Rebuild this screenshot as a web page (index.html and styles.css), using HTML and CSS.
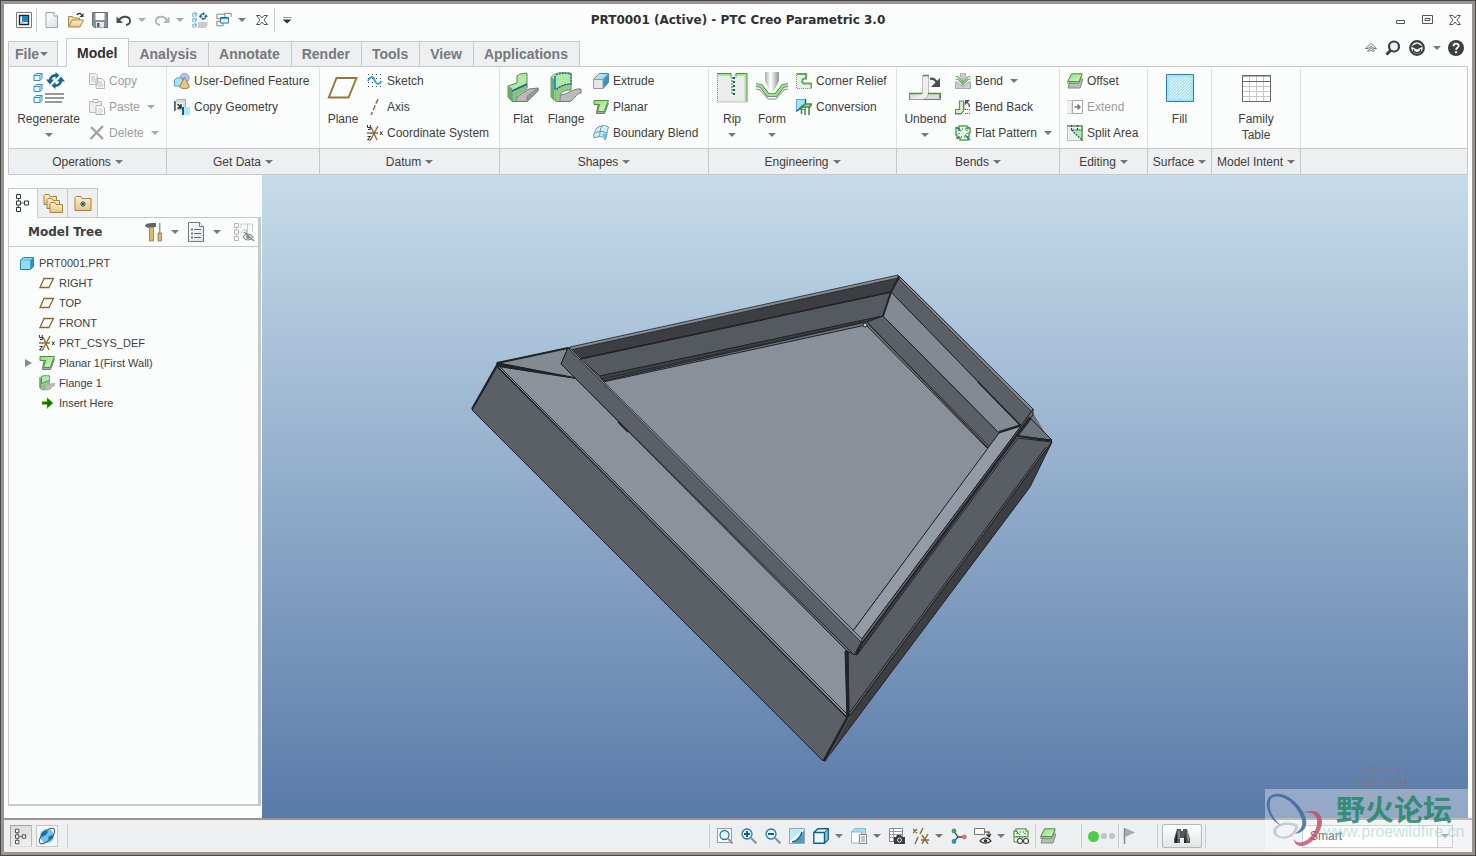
FILE: index.html
```html
<!DOCTYPE html>
<html lang="en">
<head>
  <meta charset="UTF-8">
  <meta name="viewport" content="width=device-width, initial-scale=1.0">
  <title>PRT0001 (Active) - PTC Creo Parametric 3.0</title>
  <link rel="stylesheet" href="styles.css">
</head>
<body>
  <!-- icon sprite -->
  <svg class="sprite" aria-hidden="true">
    <defs>
      <linearGradient id="gGreen" x1="0" y1="0" x2="1" y2="1"><stop offset="0" stop-color="#8fdc7c"/><stop offset="1" stop-color="#d8f8c8"/></linearGradient>
      <linearGradient id="gBlue" x1="0" y1="0" x2="1" y2="1"><stop offset="0" stop-color="#dff5fd"/><stop offset="1" stop-color="#5fb4da"/></linearGradient>
      <linearGradient id="gFolder" x1="0" y1="0" x2="0" y2="1"><stop offset="0" stop-color="#fdf0cf"/><stop offset="1" stop-color="#e8c582"/></linearGradient>
      <linearGradient id="gSteel" x1="0" y1="0" x2="1" y2="0"><stop offset="0" stop-color="#a9adb2"/><stop offset=".4" stop-color="#fff"/><stop offset="1" stop-color="#8e9297"/></linearGradient>
      <linearGradient id="gPaper" x1="0" y1="0" x2="1" y2="1"><stop offset="0" stop-color="#fff"/><stop offset="1" stop-color="#d5e2ea"/></linearGradient>
      <pattern id="hatch" width="3" height="3" patternUnits="userSpaceOnUse"><path d="M-1 1l2-2M0 3l3-3M2 4l2-2" stroke="#fff" stroke-width="1"/></pattern>
    </defs>
    <symbol id="app" viewBox="0 0 16 16"><path d="M.5.5h15v15H.5z" fill="#fff" stroke="#777"/><path d="M3.500 3.500h9v9h-9z" fill="#fff" stroke="#222" stroke-width="1.400"/><path d="M6 4h6v6H6z" fill="#1789cf"/><path d="M4.500 9.500h3v2h-3z" fill="#8cc6e8"/></symbol>
    <symbol id="new" viewBox="0 0 16 16"><path d="M2 .5h8l3.500 3.500v11.500H2z" fill="url(#gPaper)" stroke="#9aa3a9"/><path d="M10 .5V4h3.500" fill="#fff" stroke="#9aa3a9"/></symbol>
    <symbol id="open" viewBox="0 0 16 16"><path d="M.5 15V4.500h4l1 1.500h6v2" fill="#f5dca4" stroke="#a98645"/><path d="M.5 15L4 8h11.500L12 15z" fill="url(#gFolder)" stroke="#a98645"/><path d="M9 3c1-2 3-2 4.500-.5" fill="none" stroke="#333" stroke-width="1.500"/><path d="M15.500 1v4h-4z" fill="#333"/></symbol>
    <symbol id="save" viewBox="0 0 16 16"><path d="M.5.5h15v15h-13l-2-2z" fill="#8b8f94" stroke="#6a6e72"/><path d="M3.500 1h9v7h-9z" fill="#fff"/><path d="M4 10h8v5.500H4z" fill="#dfe9ee"/><path d="M5 11h2.500v4H5z" fill="#4a6675"/></symbol>
    <symbol id="undo" viewBox="0 0 16 16"><path d="M3 8C6 3.500 13 4 14 8c.5 3-1 4.500-4 5" fill="none" stroke="#4a4c50" stroke-width="1.900"/><path d="M.5 4.500V11h6.500z" fill="#4a4c50"/></symbol>
    <symbol id="redo" viewBox="0 0 16 16"><path d="M13 8C10 3.500 3 4 2 8c-.5 3 1 4.500 4 5" fill="none" stroke="#b4b6b9" stroke-width="1.900"/><path d="M15.500 4.500V11H9z" fill="#b4b6b9"/></symbol>
    <symbol id="regen" viewBox="0 0 32 32"><g fill="#e3f8ff" stroke="#2f93be"><path id="cubelet" d="M1 3.500l2-2h6v5l-2 2H1zM1 3.500h6v5M7 3.500l2-2"/><use href="#cubelet" y="11"/><use href="#cubelet" y="22"/></g><path d="M17 9c0-4 3-6 7-5.500M28 8c0 4-3 6-7 5.500" fill="none" stroke="#17688f" stroke-width="2.600"/><path d="M13 7.500h8l-4 5zM24 9.500h8L28 4.500zM22.500 0v7l4-3.500zM22.500 10v7l-4-3.500z" fill="#17688f"/><path d="M12 22h19M12 26h19M12 30h17" stroke="#98999b" stroke-width="2"/></symbol>
    <symbol id="windows" viewBox="0 0 18 16"><path d="M1 1.500h9v5H1zM1 9.500h7v5H1zM9 .5h8v4" fill="#fff" stroke="#777"/><path d="M5 5.500h9v6H5z" fill="#d4f1fb" stroke="#1d719b"/><path d="M5 5.500h9" stroke="#1d719b" stroke-width="2"/></symbol>
    <symbol id="close" viewBox="0 0 12 12"><path d="M.5 1.500h3.500l2 2.500 2-2.500h3.500L8 6l3.500 4.500H8L6 8l-2 2.500H.5L4 6z" fill="#fff" stroke="#555"/></symbol>
    <symbol id="min" viewBox="0 0 12 12"><path d="M1.500 6.500h8v3h-8z" fill="#fff" stroke="#555"/></symbol>
    <symbol id="max" viewBox="0 0 12 12"><path d="M.5 1.500h10v8H.5zM3 4.500h5v2H3z" fill="#fff" stroke="#555"/></symbol>
    <symbol id="collapse" viewBox="0 0 12 12"><path d="M.5 6.500L6 1.500l5.500 5H9L6 4.300 3 6.500zM2.500 9L6 5.800 9.500 9H7.500L6 8 4.500 9z" fill="#fff" stroke="#555" stroke-width=".8"/></symbol>
    <symbol id="search" viewBox="0 0 16 16"><circle cx="9" cy="6.500" r="5" fill="#e8f0fb" stroke="#3d3e40" stroke-width="2.200"/><path d="M5.500 10.500L1.500 14.500" stroke="#3d3e40" stroke-width="3"/></symbol>
    <symbol id="learn" viewBox="0 0 16 16"><circle cx="8" cy="8" r="6.800" fill="#fff" stroke="#3d3e40" stroke-width="2.200"/><path d="M2 6.500l6-3 6 3-6 3z" fill="#3d3e40"/><path d="M4.500 9v2.500l3.500 1.500 3.500-1.500V9" fill="none" stroke="#3d3e40" stroke-width="1.400"/></symbol>
    <symbol id="help" viewBox="0 0 16 16"><circle cx="8" cy="8" r="8" fill="#3d3e40"/><path d="M5.500 6.200c0-3.500 5.200-3.200 5.200-.4 0 1.900-2.600 2-2.600 4" fill="none" stroke="#fff" stroke-width="1.900"/><path d="M7 11.200h2.200v2H7z" fill="#fff"/></symbol>

    <symbol id="copy" viewBox="0 0 16 16"><path d="M.5.5h6l2 2v9h-8zM7 5.500h6l2.500 2.500v7.500H7z" fill="#f2f2f2" stroke="#b9b9b9"/><path d="M2 4h4M2 6h4M2 8h4M9 9h4M9 11h5M9 13h5" stroke="#c4c4c4"/></symbol>
    <symbol id="paste" viewBox="0 0 16 16"><path d="M.5 2.500h12v11H.5z" fill="#eee" stroke="#bbb"/><path d="M4 .5h5v3H4z" fill="#fff" stroke="#b3b3b3"/><path d="M7 6.500h6l2.500 2.500v6.500H7z" fill="#fff" stroke="#b3b3b3"/><path d="M9 10h5M9 12h5M9 14h4" stroke="#c9c9c9"/></symbol>
    <symbol id="delete" viewBox="0 0 16 16"><path d="M2 2l12 12M14 1L1.500 14" stroke="#a2a2a2" stroke-width="2.400"/></symbol>
    <symbol id="udf" viewBox="0 0 16 16"><circle cx="10.500" cy="5" r="4.500" fill="#b9c3f2" stroke="#8a95cf"/><path d="M.5 7l2-2h6v6l-2 2h-6z" fill="#a6e6fb" stroke="#4aa3cc"/><path d="M10.500 4L5.500 14c2 2 8 2 10 0z" fill="#e9c583" stroke="#9d7a3f"/></symbol>
    <symbol id="copygeo" viewBox="0 0 16 16"><path d="M1.500 3l2-2.500h8V8l-2 2.500h-8z" fill="#d9d9d9" stroke="#aaa"/><path d="M2 3.500h7v7H2z" fill="#f0f0f0"/><path d="M.8 2v10" stroke="#40677f" stroke-width="1.600"/><path d="M3.500 5l3.500 3.500M7 5v4H3.500" stroke="#222" stroke-width="1.300" fill="none"/><path d="M8 8h2v8H8z" fill="#0c5d84"/><path d="M10 8h6v8h-6z" fill="#a7ecff"/></symbol>
    <symbol id="plane" viewBox="0 0 32 32"><path d="M9.500 6h20l-8 19.500H1.800z" fill="none" stroke="#98743a" stroke-width="1.900"/></symbol>
    <symbol id="planesm" viewBox="0 0 16 16"><path d="M5 3.500h9.500l-4.500 9H1z" fill="none" stroke="#8a6930" stroke-width="1.300"/></symbol>
    <symbol id="sketch" viewBox="0 0 16 16"><path d="M1 1.500h15M1 5.500h15M1 9.500h15M1 13.500h15" stroke="#444" stroke-dasharray="1 3"/><path d="M1 8c2-5 5-5 6.500-1s4 6 7 1" fill="none" stroke="#3aa3d3" stroke-width="2"/></symbol>
    <symbol id="axis" viewBox="0 0 16 16"><path d="M11 0L4 16" stroke="#8f6e3a" stroke-width="1.500" stroke-dasharray="5 2"/></symbol>
    <symbol id="csys" viewBox="0 0 16 16"><path d="M0 8h11M4 2l6 13M11 1L3.500 15" stroke="#8f6e3a" stroke-width="1.400"/><path d="M.5 0v2.500H3M3.300 0v4.500H1M.5 11.500h3L.5 15h3.200M13 6.500l2.500 3.500M15.500 6.500L13 10" fill="none" stroke="#333" stroke-width="1"/></symbol>
    <symbol id="flat" viewBox="0 0 32 32"><path d="M11 24l11-7 9-1v3L20 29.500H7z" fill="#b9b9b9" stroke="#777"/><path d="M20 24l11-8v3L20 29.500z" fill="#999" stroke="#777" stroke-width=".6"/><path d="M1 14l9-3V4l3-2 7-1v15L9 22v7.500H5L1 25z" fill="#b4e8a6" stroke="#529053"/><path d="M1 14l4 2v13L1 25z" fill="#6fa86d"/><path d="M5 19l15-6v4L10 23l-1 6.500H5.500z" fill="#8bc284" stroke="#529053" stroke-width=".6"/><path d="M5 19l15-7" stroke="#146a8c" stroke-width="1.600"/></symbol>
    <symbol id="flange" viewBox="0 0 32 32"><path d="M10 23c8 0 12-7 21-6v4c-5 0-7 8-12 8.500H9z" fill="#bcbcbc" stroke="#777"/><path d="M1 5l4-3C9 0 15 0 21 1v17c-6 0-10 2-11 5v6.500H6L1 25z" fill="#b4e8a6" stroke="#6fa86d"/><path d="M5 17c5-3 10-5 16-5v6c-6 0-10 2-11 5v6.500H6l-1-2z" fill="#96c98e" stroke="#529053" stroke-width=".6"/><path d="M1 5l3 2v22L1 25z" fill="#6fa86d"/><path d="M6 3c4-2 9-2 15-1v10c-6 0-11 2-15 6" fill="none" stroke="#14608a" stroke-width="1.300" stroke-dasharray="2 1"/><path d="M5 4v14" stroke="#2395cb" stroke-width="2"/></symbol>
    <symbol id="extrude" viewBox="0 0 16 16"><path d="M.5 6.500L6 .5h9.500v9L10 15.500z" fill="url(#gBlue)" stroke="#3c8db3"/><path d="M10 6.500L15.500.5v9l-5.500 6z" fill="#3a93bf"/><path d="M.5 6.500H10v9H.5z" fill="#e6e6e6" stroke="#999"/></symbol>
    <symbol id="planar" viewBox="0 0 16 16"><path d="M1 4.500h4.500L4 10.500l-.5 4h8L15.500 4" fill="#aaa" stroke="#777"/><path d="M1 1.500h14.500L11 12.500H4.500L6.500 5.500H1z" fill="url(#gGreen)" stroke="#4e9145"/></symbol>
    <symbol id="blend" viewBox="0 0 16 16"><path d="M4 3c4-3 8-3 11.500-1-2 5-1 9-3.500 13-1-4-6-4-11-2C0 9 2 6 4 3z" fill="#d2f0fa" stroke="#6f95a6"/><path d="M9 1C6 5 8 9 5.500 12M2 8c4-2 8-2 12 0" fill="none" stroke="#6f95a6"/><path d="M9 9l5-1-2 7z" fill="#6cbfe2"/></symbol>
    <symbol id="rip" viewBox="0 0 32 32"><path d="M1 2h30v28H1z" fill="#ececec"/><path d="M1.500 2v28H30" fill="none" stroke="#888" stroke-dasharray="1 1"/><path d="M1 3h14v3M31 3H20v3" fill="none" stroke="#a5e892" stroke-width="2"/><path d="M29.500 3v27" stroke="#a5e892" stroke-width="2"/><path d="M1 1.500h14v2M20 3.500v-2h11V30" fill="none" stroke="#4f8a49"/><path d="M16 5v18" stroke="#7aa276" stroke-width="1.600" stroke-dasharray="2 1"/><path d="M18 5v18" stroke="#0e5a86" stroke-width="2" stroke-dasharray="2 2"/></symbol>
    <symbol id="form" viewBox="0 0 32 32"><path d="M9 0h14v9l-5 10h-4L9 9z" fill="url(#gSteel)"/><path d="M0 13l5 1 7 9h8l7-9 5-1" fill="none" stroke="#5b9d54" stroke-width="4"/><path d="M0 13l5 1 7 9h8l7-9 5-1" fill="none" stroke="#a6dd97" stroke-width="2"/><path d="M0 17l4 1 8 9h8l8-9 4-1" fill="none" stroke="#888"/></symbol>
    <symbol id="corner" viewBox="0 0 16 16"><path d="M.5 1h9v4c-5 0-4 6 0 5h6v5.500H.5z" fill="#e8efe8"/><path d="M.5 1h9.500v4.500c-5-1-5 6-.5 5h6v5" fill="none" stroke="#5daa50" stroke-width="2"/><path d="M.5 2v13.500H15" fill="none" stroke="#888" stroke-dasharray="1 1"/></symbol>
    <symbol id="convert" viewBox="0 0 16 16"><path d="M.5.5h9v10h-9z" fill="#9fe3fa" stroke="#5faac8"/><path d="M9.500 0v5M0 12.500L5 9" stroke="#155f88" stroke-width="1.400"/><path d="M5 8l4-3h6.500L14 8zM5.500 8v7M9 10v6M13 8v8" fill="#9fdb90" stroke="#4e8b49" stroke-width="1.600"/></symbol>
    <symbol id="unbend" viewBox="0 0 32 32"><path d="M.5 21.500h31v6H.5z" fill="#ddd" stroke="#777"/><path d="M13.500 21.500v-18h6v16c0 4-2 8-6 8H.5" fill="#eee" stroke="#888" stroke-dasharray="1 1"/><path d="M0 21.500h13M14 3.500h6M19 21.500h12v5" stroke="#4c9144" stroke-width="1.500" fill="none"/><path d="M21 7c3-1 6 1 7 4" fill="none" stroke="#4b4c4e" stroke-width="2.200"/><path d="M31 6v9h-9z" fill="#4b4c4e"/></symbol>
    <symbol id="bend" viewBox="0 0 16 16"><path d="M5.500 0h5v4L8 8 5.500 4z" fill="#ccc" stroke="#999" stroke-width=".7"/><path d="M.5 3.500l3 .5L8 9.500 12.500 4l3-.5M.5 6l3 .5L8 12l4.500-5.500 3-.5" fill="none" stroke="#6aac62" stroke-width="1.200"/><path d="M.5 9h2L8 14l5.500-5h2v6.500H.5z" fill="#cfcfcf" stroke="#999" stroke-width=".8"/></symbol>
    <symbol id="bendback" viewBox="0 0 16 16"><path d="M.5 10.500h4V2h4v10L6 15H.5z" fill="#d8f2d2" stroke="#5c9656" stroke-width="1.200"/><path d="M.5 14.500H7M9 11V3" stroke="#777"/><path d="M10 10.500h6M10 14.500h6" stroke="#555" stroke-dasharray="1 1"/><path d="M14 8c1-2-1-4-3-5" fill="none" stroke="#555" stroke-width="1.300"/><path d="M10 1h5l-5 5z" fill="#555"/></symbol>
    <symbol id="flatpat" viewBox="0 0 16 16"><path d="M4 1h8v2h3v5h-1v4h-1v3H5v-2H2v-3H1V3h3z" fill="#e4f8dd" stroke="#5aa64e" stroke-width="1.500"/><path d="M4 4h8v8H4z" fill="none" stroke="#333" stroke-dasharray="1 2"/><path d="M1 2l5 4M10 10l5 5M2 14l2-2M12 4l2-2" stroke="#2278ad" stroke-width="1.400"/></symbol>
    <symbol id="offset" viewBox="0 0 16 16"><path d="M4 6h12l-3 9H1z" fill="#bbb" stroke="#888"/><path d="M4.500.8h10.700L12 8.500H.8z" fill="url(#gGreen)" stroke="#4c8f43"/><path d="M.8 8.500v2H12l3-8" fill="none" stroke="#6a9f63"/></symbol>
    <symbol id="extend" viewBox="0 0 16 16"><path d="M0 1.500h5v13H0" fill="#f0f0f0" stroke="#ccc"/><path d="M5.500 1.500h10v13h-10z" fill="#fff" stroke="#aaa"/><path d="M7.500 8h5M10.500 5.500L13 8l-2.500 2.500" fill="none" stroke="#777" stroke-width="1.500"/></symbol>
    <symbol id="split" viewBox="0 0 16 16"><path d="M.5.5h15v15H.5z" fill="#eee" stroke="#888" stroke-dasharray="1 1"/><path d="M5 5h9v8z" fill="#aeeb9d"/><path d="M0 1h15v15" fill="none" stroke="#5ca350" stroke-width="1.500"/><path d="M4.500 0v5h11M4.500 5L15 15M10.500 0v5" fill="none" stroke="#13547a" stroke-width="1.200" stroke-dasharray="2 1"/></symbol>
    <symbol id="fill" viewBox="0 0 32 32"><path d="M2.500 2.500h27v27h-27z" fill="#a3e5fb" stroke="#2b7fa6"/><path d="M5 5h22v22H5z" fill="url(#hatch)"/></symbol>
    <symbol id="table" viewBox="0 0 32 32"><path d="M2.500 3.500h28v26h-28z" fill="#fff" stroke="#666"/><path d="M3 14.500h27M3 19.500h27M3 24.500h27M9.500 4v25M16.500 4v25M23.500 4v25" stroke="#c6c6c6"/><path d="M2.500 4h28M2.500 9.500h28" stroke="#666"/></symbol>

    <symbol id="nodes" viewBox="0 0 16 20"><path d="M3.500 5v10M6 10h4" stroke="#666"/><path d="M1.500 1.500h4v4h-4zM1.500 8h4v4h-4zM1.500 14.500h4v4h-4zM9.500 8h4v4h-4z" fill="#fff" stroke="#333"/></symbol>
    <symbol id="folders" viewBox="0 0 20 20"><g id="fold" fill="url(#gFolder)" stroke="#a9853f"><path d="M1 2.500l1-1h4l1 2h6.500v8H1z"/></g><use href="#fold" x="3" y="4"/><use href="#fold" x="6" y="8"/></symbol>
    <symbol id="favs" viewBox="0 0 18 16"><path d="M1 2.500l1-1h5l1 2h9v12H1z" fill="url(#gFolder)" stroke="#a9853f"/><path d="M9 6v6M6 9h6M7 7l4 4M11 7l-4 4" stroke="#12587c" stroke-width="1"/></symbol>
    <symbol id="tools" viewBox="0 0 18 20"><path d="M4.500 5h4v14h-4z" fill="#e0b46e" stroke="#8d6932" stroke-width=".7"/><path d="M0 4c1-3 4-3 11-3v4H5L3 6z" fill="#5f636a"/><path d="M14 1h1.500v10H14z" fill="#999"/><path d="M13 11h3.500v8H13z" fill="#e0b46e" stroke="#8d6932" stroke-width=".7"/></symbol>
    <symbol id="settings" viewBox="0 0 16 20"><path d="M.5.5h11l4 4v15H.5z" fill="url(#gPaper)" stroke="#777"/><path d="M11.500.5v4h4" fill="#fff" stroke="#777"/><path d="M6 7.500h7M6 11.500h7M6 15.500h7" stroke="#666"/><path d="M3 6.500h2v2H3zM3 10.500h2v2H3zM3 14.500h2v2H3z" fill="#777"/></symbol>
    <symbol id="hidden" viewBox="0 0 22 20"><path d="M3.500 5v10M6 10h4M8 2h12M8 2v4M14.500 2v10M19.500 2v8" stroke="#c9c9c9" fill="none"/><path d="M1.500 1.500h4v4h-4zM1.500 8h4v4h-4zM1.500 14.500h4v4h-4zM9.500 8h4v4" fill="#fff" stroke="#b5b5b5"/><path d="M10 15c3-4 7-4 10 0-3 4-7 4-10 0zM11 10l10 9" fill="none" stroke="#888" stroke-width="1.200"/><circle cx="15" cy="15" r="2" fill="#888"/></symbol>
    <symbol id="part" viewBox="0 0 16 16"><path d="M1.500 5l3-2.500h10v9l-3 3h-10z" fill="#8fdcfa" stroke="#2f7fa6"/><path d="M1.500 5h10v9.500" fill="none" stroke="#58b3d9"/><path d="M11.500 5l3-2.500v9l-3 3z" fill="#2594c6"/></symbol>
    <symbol id="insert" viewBox="0 0 16 16"><path d="M3 6.500h5v-4l6 5.500-6 5.500v-4H3z" fill="#067a06" stroke="#9bd018" stroke-width=".6"/></symbol>
    <symbol id="globe" viewBox="0 0 18 18"><circle cx="9" cy="9" r="7" fill="#6cc6ef"/><path d="M3 7c2-4 6-4 7-2l-2 3-4 2zM10 10l4-2 1 3-4 3z" fill="#1777ae"/><ellipse cx="9" cy="9" rx="10" ry="4.500" transform="rotate(-45 9 9)" fill="none" stroke="#47565f"/></symbol>

    <symbol id="zoomfit" viewBox="0 0 16 16"><path d="M.5.5h14v14H.5z" fill="#fff" stroke="#999"/><circle cx="7.500" cy="7" r="4.500" fill="#e6f7fd" stroke="#237ca8" stroke-width="1.300"/><path d="M11 10.500l4.500 5" stroke="#999" stroke-width="2.200"/></symbol>
    <symbol id="zoomin" viewBox="0 0 16 16"><circle cx="6" cy="6" r="5" fill="#e6f7fd" stroke="#237ca8" stroke-width="1.300"/><path d="M3 6h6M6 3v6" stroke="#175f88" stroke-width="2"/><path d="M10 10l5.500 5.500" stroke="#999" stroke-width="2.400"/></symbol>
    <symbol id="zoomout" viewBox="0 0 16 16"><circle cx="6" cy="6" r="5" fill="#e6f7fd" stroke="#237ca8" stroke-width="1.300"/><path d="M3 6h6" stroke="#175f88" stroke-width="2"/><path d="M10 10l5.500 5.500" stroke="#999" stroke-width="2.400"/></symbol>
    <symbol id="repaint" viewBox="0 0 16 16"><path d="M.5.5h15v15H.5z" fill="#fff" stroke="#8fa9b5"/><path d="M1 1h14L1 13z" fill="#bfe8f5"/><path d="M15 2v13H4c5-3 8-7 11-13z" fill="#4d9dc4"/><path d="M3 14c5-1 8-4 10-10" fill="none" stroke="#17688f" stroke-width="1.500"/></symbol>
    <symbol id="cube" viewBox="0 0 16 16"><path d="M.8 4.500L5 .8h10.200v10.500l-4 4H.8z" fill="#e9f8fd" stroke="#155f88" stroke-width="1.400"/><path d="M11.500 4.500l3.700-3.700v10.500l-3.700 3.700z" fill="#7fc5e2" stroke="#155f88"/><path d="M.8 4.500h10.700v10.800" fill="none" stroke="#155f88" stroke-width="1.400"/></symbol>
    <symbol id="views" viewBox="0 0 16 16"><path d="M.5 4l3-3.500h11v7" fill="#9fe0f7" stroke="#7fbbd0"/><path d="M.5 4h10v11H.5z" fill="#fff" stroke="#aac"/><path d="M8.500 6.500h7v9h-7z" fill="#fff" stroke="#888"/><path d="M10 9h4M10 11h4M10 13h4" stroke="#888"/></symbol>
    <symbol id="viewmgr" viewBox="0 0 16 16"><path d="M.5.500h13v13H.5z" fill="#fff" stroke="#888"/><path d="M4.500 1v12M1 3.500h12M1 6.500h12M1 9.500h5" stroke="#999"/><path d="M5 9h2l1-2h4l1 2h3v7H5z" fill="#3c3d40"/><circle cx="10.500" cy="12" r="2" fill="#3c3d40" stroke="#ddd"/></symbol>
    <symbol id="datumdisp" viewBox="0 0 16 16"><path d="M0 1l4 4M4 1L0 5M10 0L7 6M5 9l-3 7M8 12h8M9 7l6 9M15 6L9 16" stroke="#8a6b35" stroke-width="1.400"/></symbol>
    <symbol id="spin" viewBox="0 0 16 16"><path d="M3 3l4 6 6 0M7 9l-5 5" fill="none" stroke="#444" stroke-width="1.300"/><circle cx="3" cy="3" r="2.400" fill="#4f9f58"/><circle cx="13.300" cy="9" r="2.400" fill="#d97777"/><circle cx="3" cy="13.500" r="2.400" fill="#3590bd"/></symbol>
    <symbol id="annot" viewBox="0 0 18 16"><path d="M.5.5h10v6H.5z" fill="#fffbe6" stroke="#777"/><path d="M11 4h4v4M12.500 6L15 9l2-3M6 13c3-4 8-4 11 0-3 3-8 3-11 0z" fill="none" stroke="#333" stroke-width="1.200"/><circle cx="11.500" cy="13" r="1.800" fill="#333"/></symbol>
    <symbol id="flatprev" viewBox="0 0 16 16"><path d="M3 .8h10v2h2v6H1V3h2z" fill="#dcf7d4" stroke="#58a24c" stroke-width="1.300"/><path d="M1 9v5h3M2 2l5 5" stroke="#4b9741" fill="none"/><path d="M4 4h8v5H4z" stroke="#444" stroke-dasharray="1 2" fill="none"/><circle cx="7" cy="13" r="2.500" fill="#fff" stroke="#444" stroke-width="1.200"/><circle cx="13" cy="13" r="2.500" fill="#fff" stroke="#444" stroke-width="1.200"/></symbol>
    <symbol id="flag" viewBox="0 0 16 16"><path d="M2.500 0v16" stroke="#888" stroke-width="1.500"/><path d="M3 0l10 4.500L3 9z" fill="#aaa"/></symbol>
    <symbol id="find" viewBox="0 0 18 18"><path d="M4 2h4v2h2V2h4l3 10v4h-6v-5H7v5H1v-4z" fill="#55575a"/><path d="M4 5L2 13v3h2zM12 5l1 11h-2z" fill="#1d1e20"/><path d="M6 4v8M14.500 5l1 9" stroke="#aaa"/></symbol>
  </svg>

  <div class="window">
    <header class="titlebar">
      <div class="quick">
        <button class="tool" aria-label="Window menu"><svg class="ic"><use href="#app"/></svg></button>
        <span class="sep"></span>
        <button class="tool" aria-label="New"><svg class="ic"><use href="#new"/></svg></button>
        <button class="tool" aria-label="Open"><svg class="ic"><use href="#open"/></svg></button>
        <button class="tool" aria-label="Save"><svg class="ic"><use href="#save"/></svg></button>
        <button class="tool" aria-label="Undo"><svg class="ic"><use href="#undo"/></svg></button>
        <button class="drop" aria-label="Undo list"><i class="caret light"></i></button>
        <button class="tool" aria-label="Redo"><svg class="ic"><use href="#redo"/></svg></button>
        <button class="drop" aria-label="Redo list"><i class="caret light"></i></button>
        <button class="tool" aria-label="Regenerate model"><svg class="ic"><use href="#regen"/></svg></button>
        <button class="tool" aria-label="Windows"><svg class="ic"><use href="#windows"/></svg></button>
        <button class="drop" aria-label="Windows list"><i class="caret"></i></button>
        <button class="tool" aria-label="Close model"><svg class="ic tiny"><use href="#close"/></svg></button>
        <span class="sep"></span>
        <button class="tool" aria-label="Customize toolbar"><i class="caret bar"></i></button>
      </div>
      <h1>PRT0001 (Active) - PTC Creo Parametric 3.0</h1>
      <div class="winbtns">
        <button aria-label="Minimize"><svg class="ic tiny"><use href="#min"/></svg></button>
        <button aria-label="Maximize"><svg class="ic tiny"><use href="#max"/></svg></button>
        <button aria-label="Close"><svg class="ic tiny"><use href="#close"/></svg></button>
      </div>
    </header>

    <nav class="tabs">
      <button class="tab file">File<i class="caret"></i></button>
      <button class="tab active">Model</button>
      <button class="tab">Analysis</button>
      <button class="tab">Annotate</button>
      <button class="tab">Render</button>
      <button class="tab">Tools</button>
      <button class="tab">View</button>
      <button class="tab last">Applications</button>
      <div class="helpers">
        <button aria-label="Collapse ribbon"><svg class="ic tiny"><use href="#collapse"/></svg></button>
        <button aria-label="Search"><svg class="ic"><use href="#search"/></svg></button>
        <button aria-label="Learning"><svg class="ic"><use href="#learn"/></svg></button>
        <button class="drop" aria-label="Learning list"><i class="caret"></i></button>
        <button aria-label="Help"><svg class="ic"><use href="#help"/></svg></button>
      </div>
    </nav>

    <section class="ribbon">
      <div class="group">
        <div class="cmds">
          <button class="big w-lg"><svg><use href="#regen"/></svg>Regenerate<i class="caret"></i></button>
          <div class="stack">
            <button class="cmd" disabled><svg class="ic"><use href="#copy"/></svg>Copy</button>
            <button class="cmd" disabled><svg class="ic"><use href="#paste"/></svg>Paste<i class="caret light"></i></button>
            <button class="cmd" disabled><svg class="ic"><use href="#delete"/></svg>Delete<i class="caret light"></i></button>
          </div>
        </div>
        <button class="title">Operations<i class="caret"></i></button>
      </div>
      <div class="group">
        <div class="cmds">
          <div class="stack">
            <button class="cmd"><svg class="ic"><use href="#udf"/></svg>User-Defined Feature</button>
            <button class="cmd"><svg class="ic"><use href="#copygeo"/></svg>Copy Geometry</button>
          </div>
        </div>
        <button class="title">Get Data<i class="caret"></i></button>
      </div>
      <div class="group">
        <div class="cmds">
          <button class="big"><svg><use href="#plane"/></svg>Plane</button>
          <div class="stack">
            <button class="cmd"><svg class="ic"><use href="#sketch"/></svg>Sketch</button>
            <button class="cmd"><svg class="ic"><use href="#axis"/></svg>Axis</button>
            <button class="cmd"><svg class="ic"><use href="#csys"/></svg>Coordinate System</button>
          </div>
        </div>
        <button class="title">Datum<i class="caret"></i></button>
      </div>
      <div class="group">
        <div class="cmds">
          <button class="big"><svg><use href="#flat"/></svg>Flat</button>
          <button class="big w-sm"><svg><use href="#flange"/></svg>Flange</button>
          <div class="stack">
            <button class="cmd"><svg class="ic"><use href="#extrude"/></svg>Extrude</button>
            <button class="cmd"><svg class="ic"><use href="#planar"/></svg>Planar</button>
            <button class="cmd"><svg class="ic"><use href="#blend"/></svg>Boundary Blend</button>
          </div>
        </div>
        <button class="title">Shapes<i class="caret"></i></button>
      </div>
      <div class="group">
        <div class="cmds">
          <button class="big"><svg><use href="#rip"/></svg>Rip<i class="caret"></i></button>
          <button class="big"><svg><use href="#form"/></svg>Form<i class="caret"></i></button>
          <div class="stack">
            <button class="cmd"><svg class="ic"><use href="#corner"/></svg>Corner Relief</button>
            <button class="cmd"><svg class="ic"><use href="#convert"/></svg>Conversion</button>
          </div>
        </div>
        <button class="title">Engineering<i class="caret"></i></button>
      </div>
      <div class="group">
        <div class="cmds">
          <button class="big w-md"><svg><use href="#unbend"/></svg>Unbend<i class="caret"></i></button>
          <div class="stack">
            <button class="cmd"><svg class="ic"><use href="#bend"/></svg>Bend<i class="caret"></i></button>
            <button class="cmd"><svg class="ic"><use href="#bendback"/></svg>Bend Back</button>
            <button class="cmd"><svg class="ic"><use href="#flatpat"/></svg>Flat Pattern<i class="caret"></i></button>
          </div>
        </div>
        <button class="title">Bends<i class="caret"></i></button>
      </div>
      <div class="group">
        <div class="cmds">
          <div class="stack">
            <button class="cmd"><svg class="ic"><use href="#offset"/></svg>Offset</button>
            <button class="cmd" disabled><svg class="ic"><use href="#extend"/></svg>Extend</button>
            <button class="cmd"><svg class="ic"><use href="#split"/></svg>Split Area</button>
          </div>
        </div>
        <button class="title">Editing<i class="caret"></i></button>
      </div>
      <div class="group">
        <div class="cmds center">
          <button class="big"><svg><use href="#fill"/></svg>Fill</button>
        </div>
        <button class="title">Surface<i class="caret"></i></button>
      </div>
      <div class="group">
        <div class="cmds center">
          <button class="big w-md"><svg><use href="#table"/></svg>Family Table</button>
        </div>
        <button class="title">Model Intent<i class="caret"></i></button>
      </div>
      <div class="group rest">
        <div class="cmds"></div>
        <div class="title"></div>
      </div>
    </section>

    <main class="work">
      <aside class="navigator">
        <div class="navtabs">
          <button class="navtab active" aria-label="Model Tree"><svg class="node"><use href="#nodes"/></svg></button>
          <button class="navtab" aria-label="Folder Browser"><svg class="ic20"><use href="#folders"/></svg></button>
          <button class="navtab" aria-label="Favorites"><svg class="ic18"><use href="#favs"/></svg></button>
        </div>
        <div class="panel">
          <div class="panelhead">
            <h2>Model Tree</h2>
            <button aria-label="Tree tools"><svg class="ic20"><use href="#tools"/></svg></button>
            <button class="drop" aria-label="Tree tools list"><i class="caret"></i></button>
            <button aria-label="Tree settings"><svg class="ic20"><use href="#settings"/></svg></button>
            <button class="drop" aria-label="Tree settings list"><i class="caret"></i></button>
            <button class="hide" aria-label="Hide items" disabled><svg class="ic22"><use href="#hidden"/></svg></button>
          </div>
          <ul class="tree">
            <li class="root"><svg class="ic"><use href="#part"/></svg>PRT0001.PRT</li>
            <li><svg class="ic"><use href="#planesm"/></svg>RIGHT</li>
            <li><svg class="ic"><use href="#planesm"/></svg>TOP</li>
            <li><svg class="ic"><use href="#planesm"/></svg>FRONT</li>
            <li><svg class="ic"><use href="#csys"/></svg>PRT_CSYS_DEF</li>
            <li class="closed"><svg class="ic"><use href="#planar"/></svg>Planar 1(First Wall)</li>
            <li><svg class="ic"><use href="#flange"/></svg>Flange 1</li>
            <li><svg class="ic"><use href="#insert"/></svg>Insert Here</li>
          </ul>
        </div>
      </aside>

      <div class="canvas">
        <svg class="model" viewBox="262 175 1206 643" role="img" aria-label="Sheet metal part">
          <g stroke="#222328" stroke-width="1" stroke-linejoin="round">
            <path d="M497 364L568 349 899 278 1032 411 1050 441 850 714 600 500z" fill="#6d737a" stroke="none"/>
            <!-- outer flanges -->
            <path d="M497 363L568 348 561 364 575 378z" fill="#838a92"/>
            <path d="M1031 419L1052 440 1018 436z" fill="#6d747b"/>
            <path d="M497 366L575 378 847 651 847 717z" fill="#8b929a"/>
            <path d="M497 367L847 718 823 761 472 410z" fill="#5b5f66"/>
            <path d="M1018 438L1052 442 849 717 848 652 857 655z" fill="#595e64"/>
            <path d="M1052 442L1030 487 825 761 849 717z" fill="#3c3e42"/>
            <path d="M1046 447L850 712M499 366L847 714" fill="none"/>
            <!-- back wall -->
            <path d="M568 348L899 276 891 293 580 359z" fill="#3c3e42"/>
            <path d="M570 347L898 275 898 278 570 350z" fill="#848b93" stroke-width=".8"/>
            <path d="M580 359L891 292 883 316 600 376z" fill="#555a60"/>
            <path d="M600 376L883 316 866 322 603 381z" fill="#3f4246"/>
            <!-- right wall -->
            <path d="M899 276L1033 409 1021 426 891 292z" fill="#5b5f66"/>
            <path d="M891 292L1021 426 999 433 883 316z" fill="#838a93"/>
            <path d="M883 316L999 433 988 448 867 322z" fill="#5b5f66"/>
            <path d="M899 276L1033 409 1032 412 899 279z" fill="#848b93" stroke-width=".8"/>
            <!-- base -->
            <path d="M603 382L866 325 988 449 853 631z" fill="#89909a"/>
            <path d="M601 379L864 322M868 324L990 447" fill="none" stroke-width=".7"/>
            <path d="M988 448L999 433 1021 426 861 640 853 631z" fill="#949ba6"/>
            <path d="M1033 409L1033 415 856 655 861 640 1021 426z" fill="#62676e"/>
            <path d="M1030 417L861 645 856 655" fill="none" stroke-width="2"/>
            <!-- left wall -->
            <path d="M568 348L862 641 854 655 561 364z" fill="#5b5f66"/>
            <path d="M568 348L571 349 862 639 861 642z" fill="#858c94" stroke-width=".8"/>
            <!-- corner reliefs -->
            <path d="M497 363L575 378 497 366zM618 422l10 10" fill="#222328" stroke-width="1.500"/>
            <path d="M497 363L568 348M497 365L472 409M899 277L891 292 883 316M1018 436L1052 441M999 432L1021 425" fill="none" stroke-width="2"/>
            <path d="M580 359L891 292M978 382L1021 426" fill="none" stroke-width="1.500"/>
            <path d="M845 651h3l1 66h-2z" fill="#222328"/>
            <path d="M848 717L824 761" stroke-width="3"/>
            <path d="M850 716L826 761" stroke="#55595f"/>
            <circle cx="865" cy="325" r="2" fill="#b5cbe1"/>
          </g>
        </svg>
        <div class="tolerances">X.X+-0.1<br>X.XX+-0.01<br>X.XXX+-0.001<br>ANG.+-0.5</div>
      </div>
    </main>

    <footer class="status">
      <button class="square pressed" aria-label="Toggle navigator"><svg class="node"><use href="#nodes"/></svg></button>
      <button class="square" aria-label="Toggle browser"><svg class="ic18"><use href="#globe"/></svg></button>
      <span class="sep"></span>
      <div class="viewtools">
        <span class="sep"></span>
        <button class="tool" aria-label="Refit"><svg class="ic"><use href="#zoomfit"/></svg></button>
        <button class="tool" aria-label="Zoom in"><svg class="ic"><use href="#zoomin"/></svg></button>
        <button class="tool" aria-label="Zoom out"><svg class="ic"><use href="#zoomout"/></svg></button>
        <button class="tool" aria-label="Repaint"><svg class="ic"><use href="#repaint"/></svg></button>
        <button class="tool" aria-label="Display style"><svg class="ic"><use href="#cube"/></svg></button>
        <button class="drop" aria-label="Display style list"><i class="caret"></i></button>
        <button class="tool" aria-label="Saved views"><svg class="ic"><use href="#views"/></svg></button>
        <button class="drop" aria-label="Saved views list"><i class="caret"></i></button>
        <button class="tool" aria-label="View manager"><svg class="ic"><use href="#viewmgr"/></svg></button>
        <button class="tool" aria-label="Datum display"><svg class="ic"><use href="#datumdisp"/></svg></button>
        <button class="drop" aria-label="Datum display list"><i class="caret"></i></button>
        <button class="tool" aria-label="Spin center"><svg class="ic"><use href="#spin"/></svg></button>
        <button class="tool" aria-label="Annotation display"><svg class="ic18"><use href="#annot"/></svg></button>
        <button class="drop" aria-label="Annotation display list"><i class="caret"></i></button>
        <button class="tool" aria-label="Flat preview"><svg class="ic"><use href="#flatprev"/></svg></button>
        <span class="sep"></span>
        <button class="tool" aria-label="Sheet metal"><svg class="ic"><use href="#offset"/></svg></button>
      </div>
      <div class="lights"><i class="on"></i><i></i><i></i></div>
      <div class="notify"><svg class="ic"><use href="#flag"/></svg></div>
      <button class="find" aria-label="Find"><svg class="ic18"><use href="#find"/></svg></button>
      <span class="sep"></span>
      <div class="filterbox">
        <select class="filter" aria-label="Selection filter"><option>Smart</option></select>
        <span class="arrow"><i class="caret"></i></span>
      </div>
    </footer>

    <div class="watermark">
      <svg viewBox="0 0 60 60">
        <path fill-rule="evenodd" fill="#b9c2d2" d="M9 40c5-7 18-8 25-4 1 8-8 16-17 14-6-1-10-5-8-10zM12 41c-1 4 2 7 6 7 7 1 13-5 13-10-6-3-15-3-19 3z"/>
        <path fill-rule="evenodd" fill="#3b6598" d="M2 16C1 3 14 0 27 9c12 9 18 22 15 29-2 5-7 7-11 7 5-3 9-7 7-15C35 20 26 9 15 7 7 6 4 9 5 18c1 7 6 14 12 19C8 33 3 25 2 16z"/>
        <path fill="#c14a66" d="M39 24c8-5 20-3 20 9-1 12-11 24-21 25-5 0-8-3-8-7 2 3 5 4 8 3 9-2 16-13 16-21 0-8-7-11-15-9z"/>
      </svg>
      <div class="marktext">
        <strong lang="zh">野火论坛</strong>
        <span>www.proewildfire.cn</span>
      </div>
    </div>
  </div>
</body>
</html>
```
FILE: styles.css
```css
* { box-sizing: border-box; }
body { margin: 0; font-family: "Liberation Sans", Arial, sans-serif; font-size: 12px; color: #3d3e40; }
button { border: 0; padding: 0; margin: 0; background: none; font: inherit; color: inherit; }
h1, h2 { margin: 0; }
svg { display: block; flex: none; }
.sprite { position: absolute; width: 0; height: 0; }

.window { position: relative; display: flex; flex-direction: column; height: 100vh; padding: 3px; border: 1px solid #4b4848; background: #979492; }

/* icons */
.ic { width: 16px; height: 16px; }
.ic18 { width: 18px; height: 18px; }
.ic20 { width: 20px; height: 20px; }
.ic22 { width: 22px; height: 20px; }
.tiny { width: 12px; height: 12px; }
.node { width: 16px; height: 20px; }
.caret { flex: none; width: 0; height: 0; border: 4px solid transparent; border-top-color: #77787a; border-bottom: 0; }
.caret.light { border-top-color: #a9a9a9; }
.caret.bar { width: 9px; height: 7px; border: 0; background: #333; clip-path: polygon(0 0, 100% 0, 100% 1px, 0 1px, 0 3px, 100% 3px, 50% 100%, 0 3px); }
.sep { flex: none; width: 1px; height: 24px; background: #c9cbcd; }
.tool { display: flex; align-items: center; justify-content: center; width: 24px; height: 24px; }
.drop { display: flex; align-items: center; justify-content: center; width: 12px; height: 24px; margin-right: 2px; }

/* title bar */
.titlebar { display: grid; grid-template-columns: 1fr auto 1fr; align-items: center; height: 32px; padding: 0 8px; background: #fbfcfc; }
.titlebar h1 { font-family: "DejaVu Sans", Verdana, sans-serif; font-size: 12px; font-weight: bold; color: #2f3032; }
.quick { display: flex; align-items: center; }
.quick .sep { margin: 0 3px 0 0; }
.quick .sep:last-of-type { margin: 0; }
.winbtns { display: flex; justify-content: flex-end; gap: 15px; padding-right: 3px; }

/* ribbon tabs */
.tabs { display: flex; align-items: flex-end; height: 30px; padding: 0 4px; background: #fbfcfc; }
.tab { height: 25px; padding: 0 11px 0 10px; border: 1px solid #c6c9cc; border-width: 1px 0 0 1px; background: #edeff1; font-size: 14px; font-weight: bold; color: #77797d; }
.tab.file { display: flex; align-items: center; gap: 1px; width: 50px; padding: 0 6px; margin-right: 8px; border-width: 1px; border-bottom: 0; }
.tab.active { position: relative; z-index: 1; height: 29px; margin-bottom: -1px; border-width: 1px 1px 0; background: #fbfcfc; color: #2f3032; }
.tab.active + .tab { border-left: 0; }
.tab.last { border-right-width: 1px; }
.helpers { display: flex; align-items: center; gap: 8px; height: 36px; margin: 0 4px 0 auto; }
.helpers .drop { margin: 0 -3px 0 -2px; }

/* ribbon */
.ribbon { display: grid; grid-template-columns: 159px 153px 180px 209px 188px 163px 88px 64px 89px 1fr; flex: none; height: 109px; border: solid #fbfcfc; border-width: 0 4px; background: #fbfcfc; }
.group { display: flex; flex-direction: column; border: solid #c6c9cc; border-width: 1px 0; white-space: nowrap; }
.group:first-child { border-left-width: 1px; }
.group.rest { border-right-width: 1px; }
.cmds { display: flex; flex: 1; gap: 8px; padding: 1px 7px 0; border-right: 1px solid #e0e2e4; }
.cmds.center { justify-content: center; }
.title { display: flex; flex: none; align-items: center; justify-content: center; gap: 4px; height: 26px; border: solid #c6c9cc; border-width: 1px 1px 0 0; background: #edeff1; }
.rest .cmds, .rest .title { border-right: 0; }
.stack { display: flex; flex-direction: column; }
.cmd { display: flex; align-items: center; gap: 4px; height: 26px; }
.cmd .caret { margin-left: 3px; }
.cmd:disabled { color: #9c9da0; }
.big { display: flex; flex-direction: column; align-items: center; width: 32px; height: 80px; padding-top: 4px; line-height: 16px; white-space: normal; }
.big svg { width: 32px; height: 32px; margin-bottom: 7px; }
.big .caret { margin-top: 6px; }
.w-sm { width: 38px; }
.w-md { width: 44px; }
.w-lg { width: 65px; }

/* work area */
.work { display: flex; flex: 1; min-height: 0; padding-right: 4px; background: #fbfcfc; }
.navigator { display: flex; flex: none; flex-direction: column; width: 258px; padding: 13px 1px 12px 4px; }
.navtabs { display: flex; flex: none; height: 30px; }
.navtab { display: flex; align-items: center; justify-content: center; width: 30px; border: 1px solid #c6c9cc; border-left-width: 0; background: #edeff1; }
.navtab.active { position: relative; border-left-width: 1px; border-bottom-color: #fbfcfc; background: #fbfcfc; z-index: 1; }
.panel { flex: 1; margin-top: -1px; border: 1px solid #c6c9cc; border-right-width: 3px; border-bottom-width: 2px; }
.panelhead { display: flex; align-items: center; height: 29px; padding: 0 3px 0 19px; border-bottom: 1px solid #c6c9cc; }
.panelhead h2 { flex: 1; font-family: "DejaVu Sans", Verdana, sans-serif; font-size: 12px; }
.panelhead .drop { width: 22px; margin: 0; }
.panelhead .hide { margin-left: 5px; }
.tree { margin: 0; padding: 6px 0 0 30px; list-style: none; font-size: 11px; }
.tree li { display: flex; align-items: center; gap: 4px; height: 20px; }
.tree .root { margin-left: -20px; }
.tree .closed { margin-left: -14px; }
.tree .closed::before { content: ""; margin-right: 3px; border: 4px solid transparent; border-left: 7px solid #88898b; border-right: 0; }

.canvas { position: relative; flex: 1; min-width: 0; background: linear-gradient(#c6dcea, #5a7aa9); }
.model { width: 100%; height: 100%; }
.tolerances { position: absolute; right: 52px; bottom: 5px; font-size: 11px; line-height: 12px; text-align: center; color: #7f7a80; }

/* status bar */
.status { display: flex; flex: none; align-items: center; height: 34px; padding: 0 19px 0 6px; border-top: 2px solid #979492; background: #edeff1; }
.square { display: flex; align-items: center; justify-content: center; width: 22px; height: 22px; margin-right: 4px; border: 1px solid #c6c9cc; background: #f5f6f7; }
.square.pressed { border-color: #a5a5a5 #bbb #ddd #a5a5a5; background: linear-gradient(#dcdde1, #f0f0f2); }
.square .node { height: 17px; }
.square + .sep { margin-left: 5px; }
.viewtools { display: flex; align-items: center; margin-left: auto; }
.viewtools .sep { margin-right: 3px; }
.viewtools .sep:last-of-type { margin: 0 0 0 2px; }
.lights { display: flex; align-items: center; gap: 2px; width: 37px; height: 24px; margin-left: 21px; padding-left: 6px; border-left: 1px solid #c9cbcd; }
.lights i { width: 6px; height: 6px; border-radius: 50%; background: #c2c3c5; }
.lights .on { width: 11px; height: 11px; background: #47d147; }
.notify { display: flex; align-items: center; width: 40px; height: 24px; padding-left: 3px; border: solid #c9cbcd; border-width: 0 1px; }
.find { display: flex; align-items: center; justify-content: center; width: 40px; height: 24px; margin: 0 3px 0 4px; border: 1px solid #b4b6b9; border-radius: 2px; background: linear-gradient(#fff, #e3e4e6); }
.filterbox { display: flex; width: 151px; height: 23px; margin-left: 96px; border: 1px solid #b4b6b9; background: #fff; }
.filter { flex: 1; min-width: 0; padding: 0 7px; border: 0; appearance: none; background: none; font: inherit; color: #222; }
.arrow { display: flex; align-items: center; justify-content: center; width: 15px; border-left: 1px solid #b4b6b9; background: #f0f1f2; }

/* forum watermark over the corner */
.watermark { position: absolute; right: 3px; bottom: 3px; display: flex; width: 207px; height: 63px; background: rgba(255, 255, 255, 0.35); pointer-events: none; }
.watermark svg { width: 58px; height: 60px; opacity: 0.8; }
.marktext { display: flex; flex-direction: column; line-height: 1; }
.marktext strong { margin: 5px 0 1px 13px; font-family: "Noto Sans CJK SC", sans-serif; font-size: 29px; color: rgba(35, 135, 105, 0.85); }
.marktext span { font-size: 16px; color: rgba(150, 210, 200, 0.6); white-space: nowrap; }
```
